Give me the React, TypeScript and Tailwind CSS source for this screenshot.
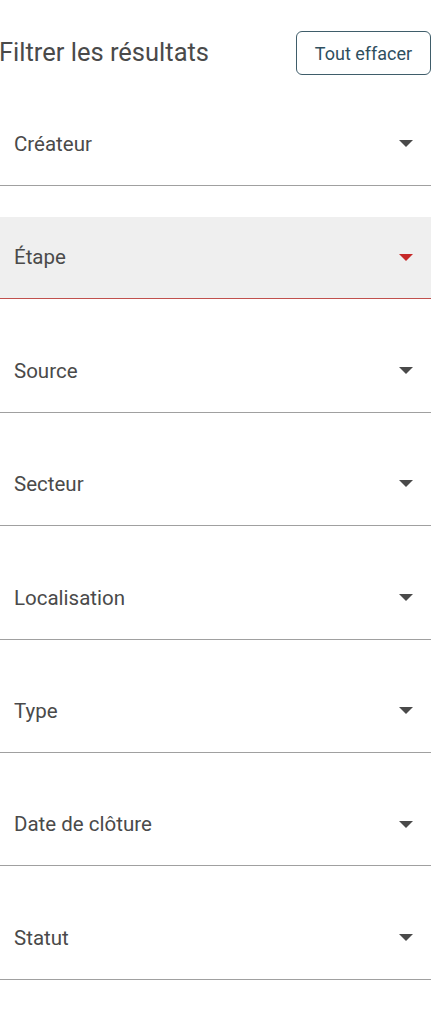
import React from "react";

const fields = [
  "Créateur",
  "Étape",
  "Source",
  "Secteur",
  "Localisation",
  "Type",
  "Date de clôture",
  "Statut",
];

function Arrow({ active }: { active: boolean }) {
  return (
    <svg width="14" height="8" viewBox="0 0 14 8" className="shrink-0">
      <path d="M0 0 L14 0 L7 7 Z" fill={active ? "#c62828" : "#4a4a4a"} />
    </svg>
  );
}

export default function App() {
  return (
    <div
      className="w-[445px] min-h-[1024px] bg-white"
      style={{ fontFamily: "Roboto, 'Noto Sans', sans-serif" }}
    >
      <div className="w-[431px]">
        <div className="flex items-center justify-between pt-[31px] h-[75px]">
          <h2 className="text-[25.5px] text-[#4a4a4a] leading-none -ml-px">
            Filtrer les résultats
          </h2>
          <button className="h-[44px] w-[135px] rounded-[6px] border border-[#3f5d6a] text-[18px] text-[#2f4f5f] flex items-center justify-center">
            Tout effacer
          </button>
        </div>
        <div className="flex flex-col pt-[28.6px]">
          {fields.map((f, i) => {
            const active = i === 1;
            return (
              <div
                key={f}
                className={`h-[82.4px] mb-[31px] flex items-center justify-between pl-[14px] pr-[18px] border-b ${
                  active
                    ? "bg-[#efefef] border-[#c0504d]"
                    : "bg-white border-[#a0a0a0]"
                }`}
              >
                <span className="text-[20.5px] leading-none text-[#4a4a4a]">{f}</span>
                <Arrow active={active} />
              </div>
            );
          })}
        </div>
      </div>
    </div>
  );
}
